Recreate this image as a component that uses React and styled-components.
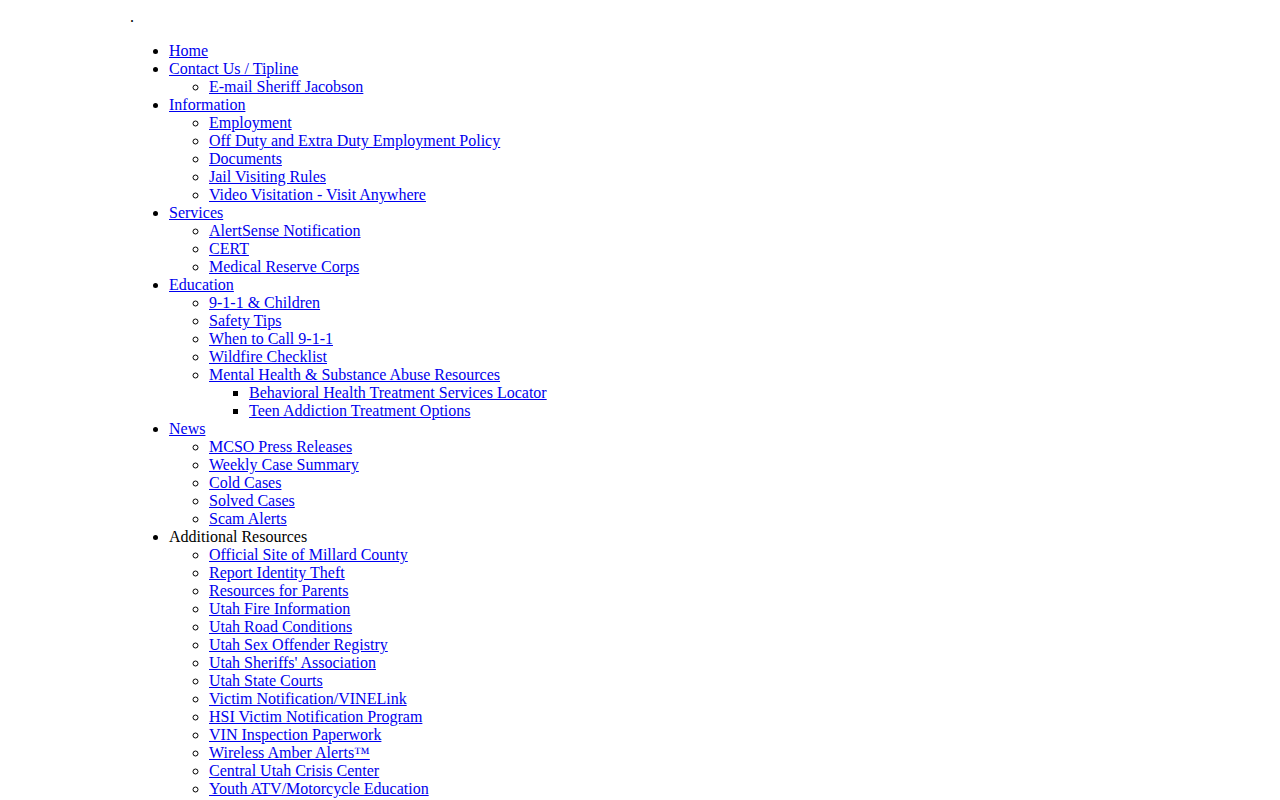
import React from 'react'
import styled, { createGlobalStyle } from 'styled-components'

const GlobalStyle = createGlobalStyle`
  body {
    margin: 8px;
    background: #fff;
    color: #000;
    font-family: "Liberation Serif", "Times New Roman", serif;
    font-size: 16px;
    line-height: 18px;
  }
`

const Wrapper = styled.div`
  margin-left: 121px;
`

const Dot = styled.div`
  padding-left: 1px;
  height: 18px;
`

const Menu = styled.ul`
  margin: 16px 0;
  padding-left: 40px;
  list-style-type: disc;
`

const SubMenu = styled.ul`
  margin: 0;
  padding-left: 40px;
  list-style-type: ${props => (props.$level === 3 ? 'square' : 'circle')};
`

const Link = styled.a`
  color: #0000ee;
  text-decoration: underline;
`

const menu = [
  { label: 'Home' },
  { label: 'Contact Us / Tipline', children: [{ label: 'E-mail Sheriff Jacobson' }] },
  {
    label: 'Information',
    children: [
      { label: 'Employment' },
      { label: 'Off Duty and Extra Duty Employment Policy' },
      { label: 'Documents' },
      { label: 'Jail Visiting Rules' },
      { label: 'Video Visitation - Visit Anywhere' },
    ],
  },
  {
    label: 'Services',
    children: [
      { label: 'AlertSense Notification' },
      { label: 'CERT' },
      { label: 'Medical Reserve Corps' },
    ],
  },
  {
    label: 'Education',
    children: [
      { label: '9-1-1 & Children' },
      { label: 'Safety Tips' },
      { label: 'When to Call 9-1-1' },
      { label: 'Wildfire Checklist' },
      {
        label: 'Mental Health & Substance Abuse Resources',
        children: [
          { label: 'Behavioral Health Treatment Services Locator' },
          { label: 'Teen Addiction Treatment Options' },
        ],
      },
    ],
  },
  {
    label: 'News',
    children: [
      { label: 'MCSO Press Releases' },
      { label: 'Weekly Case Summary' },
      { label: 'Cold Cases' },
      { label: 'Solved Cases' },
      { label: 'Scam Alerts' },
    ],
  },
  {
    label: 'Additional Resources',
    plain: true,
    children: [
      { label: 'Official Site of Millard County' },
      { label: 'Report Identity Theft' },
      { label: 'Resources for Parents' },
      { label: 'Utah Fire Information' },
      { label: 'Utah Road Conditions' },
      { label: 'Utah Sex Offender Registry' },
      { label: "Utah Sheriffs' Association" },
      { label: 'Utah State Courts' },
      { label: 'Victim Notification/VINELink' },
      { label: 'HSI Victim Notification Program' },
      { label: 'VIN Inspection Paperwork' },
      { label: 'Wireless Amber Alerts™' },
      { label: 'Central Utah Crisis Center' },
      { label: 'Youth ATV/Motorcycle Education' },
    ],
  },
]

const Item = ({ item, level }) => (
  <li>
    {item.plain ? item.label : <Link href="#">{item.label}</Link>}
    {item.children && (
      <SubMenu $level={level + 1}>
        {item.children.map(child => (
          <Item key={child.label} item={child} level={level + 1} />
        ))}
      </SubMenu>
    )}
  </li>
)

const App = () => {
  return (
    <Wrapper>
      <GlobalStyle />
      <Dot>.</Dot>
      <Menu>
        {menu.map(item => (
          <Item key={item.label} item={item} level={1} />
        ))}
      </Menu>
    </Wrapper>
  )
}

export default App
